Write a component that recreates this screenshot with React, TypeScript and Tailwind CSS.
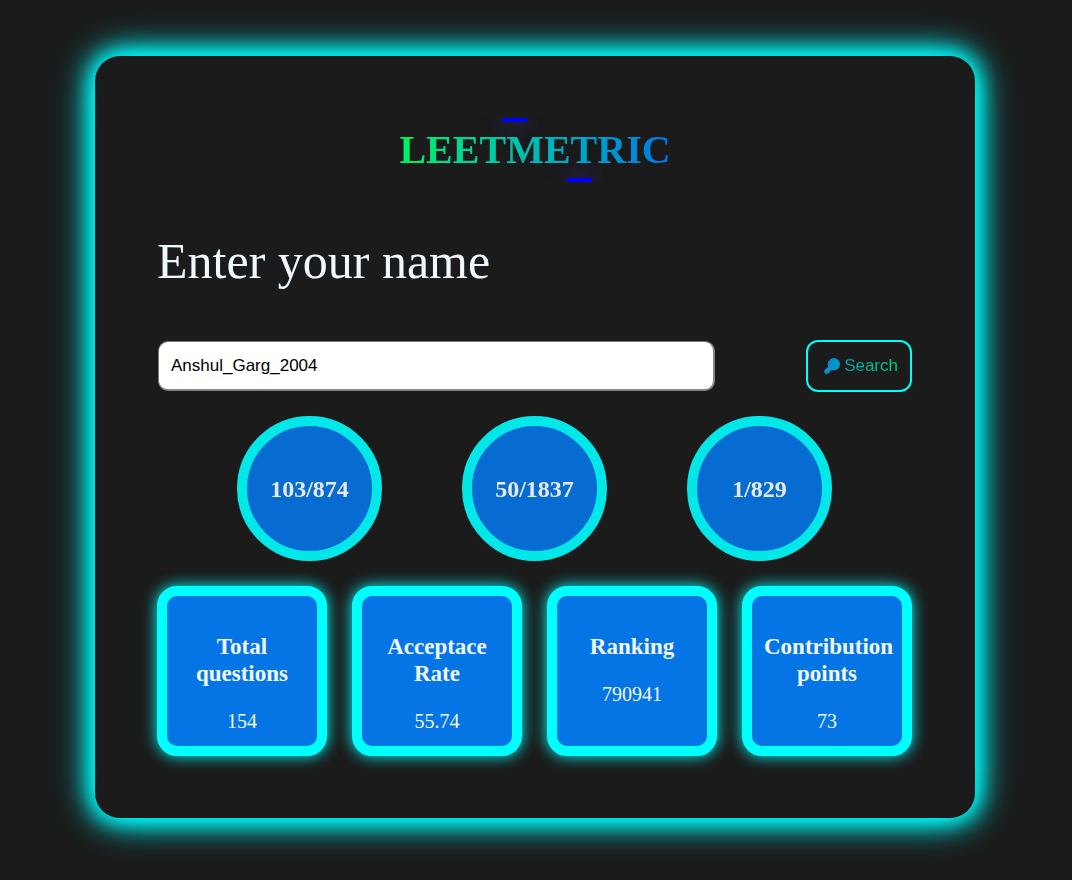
const progress = [
  { level: 'Easy', value: '103/874' },
  { level: 'Medium', value: '50/1837' },
  { level: 'Hard', value: '1/829' },
];

const stats = [
  { title: 'Total questions', value: '154' },
  { title: 'Acceptace Rate', value: '55.74' },
  { title: 'Ranking', value: '790941' },
  { title: 'Contribution points', value: '73' },
];

function SearchIcon() {
  return (
    <svg className="h-4 w-4 shrink-0" viewBox="0 0 16 16" aria-hidden="true">
      <defs>
        <linearGradient id="lens" x1="0" x2="1">
          <stop offset="0" stopColor="#0588d4" />
          <stop offset="1" stopColor="#059bbd" />
        </linearGradient>
      </defs>
      <g fill="url(#lens)">
        <circle cx="9.8" cy="6.3" r="6.2" />
        <path d="M5 8.2 L8 11.2 L6.5 12.5 L6 13.8 L4.2 15.5 Q2.6 16.4 1.1 15.4 L.6 14.9 Q-.3 13.5 .6 12 L2.5 10 L3.7 9.6 Z" />
      </g>
    </svg>
  );
}

export default function App() {
  return (
    <div className="flex min-h-screen items-start justify-center overflow-hidden bg-[#1b1b1b] pt-14 pr-6 pb-15 pl-[22px] font-['Liberation_Serif',serif] text-[aliceblue]">
      <main className="w-full max-w-[880px] rounded-[25px] bg-[#1b1b1b] p-[62px] shadow-[0_0_20px_aqua,0_0_30px_aqua,0_0_40px_aqua]">
        <header className="flex justify-center">
          <div className="relative overflow-hidden">
            <span className="absolute top-0 left-[103px] h-1 w-[25px] bg-[blue] shadow-[0_0_20px_rgba(80,70,255,0.4),0_0_30px_rgba(80,70,255,0.5)]" />
            <span className="absolute right-[79px] bottom-0 h-1 w-[25px] bg-[blue] shadow-[0_0_20px_rgba(80,70,255,0.4),0_0_30px_rgba(80,70,255,0.5)]" />
            <h1 className="relative bg-linear-to-r from-[#00f260] to-[#0575e6] bg-clip-text text-[40px] leading-16 font-bold text-transparent">
              LEETMETRIC
            </h1>
          </div>
        </header>

        <form onSubmit={(e) => e.preventDefault()}>
          <label htmlFor="username" className="mt-[51px] block text-[50px] leading-14">
            Enter your name
          </label>
          <div className="mt-[51px] flex items-center justify-between gap-6 pr-px font-['Liberation_Sans',sans-serif] text-[17px]">
            <input
              id="username"
              type="text"
              defaultValue="Anshul_Garg_2004"
              className="ml-px h-[50px] w-[557px] min-w-0 rounded-[10px] border border-r-2 border-b-2 border-[#767676] border-r-[#858585] border-b-[#858585] bg-white px-3 text-black"
            />
            <button
              type="submit"
              className="flex h-[52px] shrink-0 items-center justify-center gap-1 rounded-xl border-2 border-[aqua] px-3 pl-4"
            >
              <SearchIcon />
              <span className="bg-linear-to-r from-[#05a0b4] to-[#00d878] bg-clip-text text-transparent">Search</span>
            </button>
          </div>
        </form>

        <section className="mt-6 flex flex-wrap justify-center gap-20 pr-px" aria-label="Solved by difficulty">
          {progress.map((item) => (
            <div
              key={item.level}
              className="flex h-[145px] w-[145px] items-center justify-center rounded-full border-10 border-[aqua] bg-[#0575e6] text-2xl font-bold text-white opacity-90"
            >
              {item.value}
            </div>
          ))}
        </section>

        <section className="mt-[25px] flex flex-wrap gap-[25px]" aria-label="Statistics">
          {stats.map((stat) => (
            <article
              key={stat.title}
              className="h-[170px] w-[170px] rounded-[20px] border-10 border-[aqua] bg-[#0575e6] px-3 pt-[37px] text-center shadow-[0_0_15px_aqua]"
            >
              <h2 className="text-[23px] leading-[27px] font-bold">{stat.title}</h2>
              <p className="mt-[23px] text-xl leading-[23px]">{stat.value}</p>
            </article>
          ))}
        </section>
      </main>
    </div>
  );
}
